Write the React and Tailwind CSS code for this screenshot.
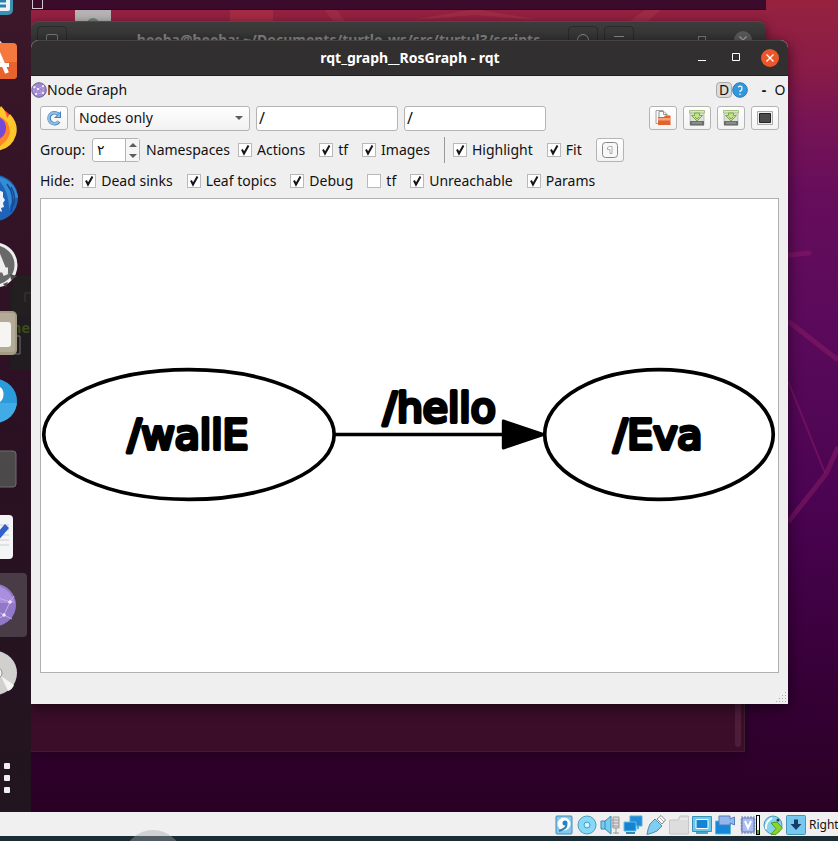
import React from "react";

const DOCK_ICON = "h-12 w-12 shrink-0 overflow-visible";

function DockItem({ label, active, children }) {
  return (
    <button
      type="button"
      aria-label={label}
      className={
        "flex h-[68px] shrink-0 items-center justify-end " +
        (active ? "w-full pr-1" : "w-full pr-[14px]")
      }
    >
      {active ? (
        <span className="flex h-16 w-[72px] shrink-0 items-center justify-end rounded-sm bg-[#4a3c47] pr-[10px]">
          <svg viewBox="0 0 48 48" className={DOCK_ICON}>{children}</svg>
        </span>
      ) : (
        <svg viewBox="0 0 48 48" className={DOCK_ICON}>{children}</svg>
      )}
    </button>
  );
}

function Dock() {
  return (
    <nav
      aria-label="Dock"
      className="relative isolate flex w-[31px] shrink-0 flex-col items-end justify-end overflow-hidden bg-linear-to-b from-[#3b1729] via-[#2c1023] to-[#21151f]"
    >
      <svg className="absolute top-[270px] left-0 -z-10 h-[100px] w-[31px]" viewBox="0 0 31 100" aria-hidden="true">
        <path d="M10 17q0-2 3-2h18v85H10z" fill="#211c20" />
        <path d="M13 6h18v40H13z" fill="#231f21" />
        <path d="M25 32v-9h6" fill="none" stroke="#3c3a3b" />
        <path d="M10 66h10v18H10" fill="none" stroke="#77706f" />
        <text x="13" y="63" fontSize="14" fontWeight="700" fill="#3c4c1b" fontFamily="DejaVu Sans Mono, monospace">he</text>
      </svg>
      <DockItem label="Writer">
        <rect x="2" y="2" width="42" height="44" rx="5" fill="#3b8fb5" />
        <rect x="4" y="2" width="37" height="40" rx="2" fill="#f0f3f5" />
        <path d="M28 32h9M28 37h9M28 27h9" stroke="#2683ad" strokeWidth="3" />
      </DockItem>
      <DockItem label="Software">
        <path d="M22 9q5-11 11-1" fill="none" stroke="#e9dcd7" strokeWidth="2" />
        <rect x="0" y="6" width="48" height="36" rx="4" fill="#f5783f" />
        <path d="M24 25h24v13q0 4-4 4H24z" fill="#e8622d" />
        <path d="M27 11l11 25M22 28h18" fill="none" stroke="#fff" strokeWidth="4" />
      </DockItem>
      <DockItem label="Firefox">
        <circle cx="24" cy="24" r="22" fill="#ff4a3b" />
        <path d="M32 1q5 5 6 12l3-4q9 10 6 21Q42 46 24 46q15-8 14-23-2-9-12-12z" fill="#ffc62c" />
        <path d="M24 10q17 2 17 18-4 13-17 14z" fill="#ff8128" />
        <circle cx="25" cy="23" r="12" fill="#7549d7" />
        <path d="M18 36q18 4 20-14 2 19-16 20z" fill="#ff862d" />
      </DockItem>
      <DockItem label="Thunderbird">
        <circle cx="26" cy="25" r="23" fill="#1e63b8" />
        <path d="M27 3q18 3 22 21-8 4-9 14 1-20-13-34z" fill="#328ed4" />
        <path d="M29 17l5 2v5l2 3-2 3 1 4-3 1 1 4-2-1-2 4h-5V17z" fill="#edf3f8" />
        <path d="M38 11q9 12 4 28M42 14q6 10 2 19" stroke="#174b96" strokeWidth="1.500" fill="none" />
      </DockItem>
      <DockItem label="Software Updater">
        <circle cx="26" cy="24" r="21" fill="#696969" stroke="#eee" strokeWidth="3" />
        <path d="M28 12l9 22M22 29h17" stroke="#eee" strokeWidth="5" />
        <path d="M41 33l7 2-6 4zM34 43l5-2-2 5z" fill="#4e4b4d" />
      </DockItem>
      <DockItem label="Files">
        <rect x="0" y="2" width="48" height="44" rx="5" fill="#a49b87" />
        <rect x="3" y="4" width="43" height="39" rx="3" fill="#b3aa97" />
        <rect x="5" y="13" width="37" height="25" rx="3" fill="#f7f5f1" />
      </DockItem>
      <DockItem label="Help">
        <circle cx="26" cy="24" r="22" fill="#2c9bdc" />
        <path d="M4 26h44q-3 18-22 20Q8 44 4 26z" fill="#40abe4" />
        <path d="M24 12q8-2 8 5t-8 8" fill="none" stroke="#fff" strokeWidth="5" />
      </DockItem>
      <DockItem label="Terminal">
        <rect x="1" y="6" width="46" height="36" rx="3" fill="#4b494a" stroke="#716d6f" />
      </DockItem>
      <DockItem label="Text Editor">
        <rect x="0" y="2" width="44" height="44" rx="4" fill="#f4f5f6" />
        <path d="M6 12h34M6 17h34M6 22h34M6 27h34M6 32h34" stroke="#c9ced1" />
        <path d="M24 25L36 11l4 4-13 15-4 1z" fill="#315fcb" />
      </DockItem>
      <DockItem label="rqt" active>
        <circle cx="26" cy="24" r="21" fill="#9278c9" />
        <path d="M26 4q15 3 20 18H26z" fill="#ab8fdf" />
        <path d="M24 15l17 6-6 13 8 4M35 34l-9 6M41 21l4-6M24 28l11 6" stroke="#c4b0e5" strokeWidth="1" fill="none" />
        <path d="M39 21h4M41 19v4M33 34h4M35 32v4" stroke="#fff" />
      </DockItem>
      <DockItem label="Disk">
        <circle cx="26" cy="24" r="22" fill="#d1d0cf" />
        <path d="M32 27l13 9q-2 5-6 6z" fill="#f4f4f3" />
        <circle cx="27" cy="24" r="6" fill="#f7f7f7" stroke="#8d8c8b" />
      </DockItem>
      <button type="button" aria-label="Show Applications" className="flex h-[105px] w-full shrink-0 flex-col gap-[6px] pt-14 pl-1">
        <span className="h-[6px] w-[6px] rounded-[1px] bg-[#f2edf1]" />
        <span className="h-[6px] w-[6px] rounded-[1px] bg-[#f2edf1]" />
        <span className="h-[6px] w-[6px] rounded-[1px] bg-[#f2edf1]" />
      </button>
    </nav>
  );
}

function Check({ label, on = true }) {
  return (
    <label className="flex shrink-0 items-center gap-[5px]">
      <span className="grid h-[14px] w-[14px]">
        <input
          type="checkbox"
          defaultChecked={on}
          className="peer col-start-1 row-start-1 m-0 h-[14px] w-[14px] appearance-none border border-[#b9b9b9] bg-white"
        />
        <svg viewBox="0 0 14 14" className="pointer-events-none invisible col-start-1 row-start-1 h-[14px] w-[14px] peer-checked:visible">
          <path d="M4 6.500l2 4 4.500-8" fill="none" stroke="#151515" strokeWidth="2" />
        </svg>
      </span>
      <span>{label}</span>
    </label>
  );
}

function ToolButton({ label, children }) {
  return (
    <button
      type="button"
      aria-label={label}
      className="flex h-6 w-7 shrink-0 items-center justify-center rounded-[3px] border border-[#b4b4b4] bg-linear-to-b from-white to-[#f3f3f3]"
    >
      <svg viewBox="0 0 16 16" className="h-4 w-4">{children}</svg>
    </button>
  );
}

function SaveDrawing() {
  return (
    <>
      <path d="M1 1h14v14H1z" fill="#dcdfda" stroke="#a3a79f" strokeWidth=".6" />
      <path d="M1 11h14v4.500H1z" fill="#6b6e6a" />
      <path d="M3 13h10" stroke="#a8aaa6" />
      <path d="M.5.500h15v2.500H.5z" fill="#d5edb2" stroke="#86a859" strokeWidth=".6" />
      <path d="M5.500 3h5v2.500h3L8 11 2.500 5.500h3z" fill="#c0e389" stroke="#719743" strokeWidth=".8" />
      <path d="M6 7l2 2 2-2" fill="none" stroke="#6d9640" strokeWidth=".8" />
    </>
  );
}

function TopicGraph() {
  return (
    <svg viewBox="0 0 738 474" className="h-full w-full" role="img" aria-label="Node graph">
      <g fill="none" stroke="#000" strokeWidth="3.700">
        <ellipse cx="148" cy="236" rx="145.500" ry="65" />
        <ellipse cx="619" cy="236" rx="114.500" ry="65" />
        <path d="M293 236h172" />
      </g>
      <path d="M463 222.500L503 236l-40 13.500z" stroke="#000" strokeWidth="3" strokeLinejoin="round" />
      <g
        fontFamily="DejaVu Sans, sans-serif"
        fontSize="41"
        textAnchor="middle"
        stroke="#000"
        strokeWidth="4"
        strokeLinejoin="round"
      >
        <text x="147" y="251">/wallE</text>
        <text x="399" y="223">/hello</text>
        <text x="618" y="251">/Eva</text>
      </g>
    </svg>
  );
}

function RqtWindow() {
  return (
    <section className="absolute top-10 right-[50px] bottom-[108px] left-0 flex flex-col rounded-t-lg bg-[#efefef] shadow-[0_3px_14px_rgba(0,0,0,0.6)]">
      <header className="flex h-9 shrink-0 items-center rounded-t-lg border-t border-b border-t-[#454343] border-b-[#1f1d1d] bg-[#322f30] pr-[9px] text-white">
        <span className="w-24 shrink-0" />
        <h1 className="min-w-0 flex-1 text-center text-sm font-bold">rqt_graph__RosGraph - rqt</h1>
        <div className="flex shrink-0 items-center gap-4">
          <button type="button" aria-label="Minimize" className="h-[18px] w-[18px]">
            <svg viewBox="0 0 18 18"><path d="M5 11.500h8" stroke="#fff" /></svg>
          </button>
          <button type="button" aria-label="Maximize" className="h-[18px] w-[18px]">
            <svg viewBox="0 0 18 18"><path d="M5.500 4.500h7v7h-7z" fill="none" stroke="#fff" /></svg>
          </button>
          <button type="button" aria-label="Close" className="h-[18px] w-[18px] rounded-full bg-[#e9572b]">
            <svg viewBox="0 0 18 18"><path d="M5.500 5.500l7 7m0-7l-7 7" stroke="#fff" strokeWidth="1.300" /></svg>
          </button>
        </div>
      </header>

      <div className="flex h-7 shrink-0 items-center pr-[2px]">
        <svg viewBox="0 0 16 16" className="h-4 w-4">
          <circle cx="8" cy="8" r="7.300" fill="#9f87d2" stroke="#70658c" />
          <path d="M3 5l4 2 5-3M7 7l-2 5M7 7l5 4M5 12l7-1M12 4v7M3 5v5" stroke="#c3b2e6" strokeWidth=".7" fill="none" />
          <path d="M2.500 5h2M6 7h2M11 4h2M4 12h2M11 11h2" stroke="#fff" strokeWidth="1.500" />
        </svg>
        <h2 className="flex-1">Node Graph</h2>
        <button type="button" className="h-4 w-4 rounded-sm border border-[#aaa] bg-[#dedcda] leading-[14px]">D</button>
        <button type="button" aria-label="Help" className="h-4 w-4">
          <svg viewBox="0 0 16 16">
            <circle cx="8" cy="8" r="7.300" fill="#3298dc" stroke="#287bb5" />
            <path d="M6 5q4-2 4 1T8 9v1M8 11.500V13" fill="none" stroke="#fff" strokeWidth="1.200" />
          </svg>
        </button>
        <button type="button" className="ml-[10px] w-3 font-bold">-</button>
        <button type="button" className="ml-1 w-3">O</button>
      </div>

      <div className="flex h-7 shrink-0 items-center gap-[6px] px-[9px]">
        <ToolButton label="Refresh">
          <path d="M13 11.500A5.500 5.500 0 1 1 12 4" fill="none" stroke="#4680b8" strokeWidth="3.600" />
          <path d="M15 1v7H8z" fill="#4680b8" />
          <path d="M12.500 11.500A5.500 5.500 0 1 1 12 4.300" fill="none" stroke="#8fbde6" strokeWidth="2.200" />
          <path d="M14 3.200V7h-3.800z" fill="#8fbde6" />
        </ToolButton>
        <div className="grid w-[176px] items-center">
          <select
            aria-label="Graph type"
            className="col-start-1 row-start-1 h-[25px] w-full appearance-none rounded-[3px] border border-[#b4b4b4] bg-linear-to-b from-white to-[#f1f1f1] pl-1"
          >
            <option>Nodes only</option>
            <option>Nodes/Topics (active)</option>
            <option>Nodes/Topics (all)</option>
          </select>
          <svg viewBox="0 0 8 4" className="pointer-events-none col-start-1 row-start-1 mr-[7px] h-1 w-2 justify-self-end">
            <path d="M0 0h8L4 4z" fill="#5c5c5c" />
          </svg>
        </div>
        <input aria-label="Node filter" defaultValue="/" className="h-[25px] w-[142px] rounded-[3px] border border-[#b4b4b4] bg-white px-[2px] text-base" />
        <input aria-label="Topic filter" defaultValue="/" className="h-[25px] w-[142px] rounded-[3px] border border-[#b4b4b4] bg-white px-[2px] text-base" />
        <span className="flex-1" />
        <ToolButton label="Load graph">
          <path d="M1 .5h7v13H1z" fill="#f7f7f7" stroke="#a5a5a5" />
          <path d="M4 1.500h5l3 3v6H4z" fill="#fff" stroke="#969696" />
          <path d="M8.500 1.500v3H12" fill="none" stroke="#969696" />
          <path d="M3 7h6l1-1.500h5.500V15H3z" fill="#e4632c" />
          <path d="M3 8h12.500v2.500H3z" fill="#f5a47c" />
        </ToolButton>
        <ToolButton label="Save as DOT"><SaveDrawing /></ToolButton>
        <ToolButton label="Save as SVG"><SaveDrawing /></ToolButton>
        <ToolButton label="Save as image">
          <path d="M.5 1.500h15v13H.5z" fill="#eee" stroke="#aaa" />
          <path d="M2.500 3.500h11v9h-11z" fill="#4b4b4b" stroke="#222" />
        </ToolButton>
      </div>

      <div className="flex h-9 shrink-0 items-center pl-[9px]">
        <label htmlFor="group" className="w-[52px]">Group:</label>
        <div className="flex h-6 w-12 rounded-[3px] border border-[#b4b4b4] bg-white">
          <input id="group" defaultValue="٢" className="w-0 flex-1 pl-1" />
          <div className="flex w-[14px] flex-col border-l border-[#b4b4b4] bg-[#f5f5f5]">
            <button type="button" aria-label="Increase" className="flex flex-1 items-center justify-center">
              <svg viewBox="0 0 8 4" className="h-1 w-2"><path d="M0 4h8L4 0z" fill="#5c5c5c" /></svg>
            </button>
            <button type="button" aria-label="Decrease" className="flex flex-1 items-center justify-center">
              <svg viewBox="0 0 8 4" className="h-1 w-2"><path d="M0 0h8L4 4z" fill="#5c5c5c" /></svg>
            </button>
          </div>
        </div>
        <span className="ml-[6px] w-[92px]">Namespaces</span>
        <div className="flex items-center gap-[14px]">
          <Check label="Actions" />
          <Check label="tf" />
          <Check label="Images" />
        </div>
        <span className="mr-2 ml-[14px] h-[26px] w-px bg-[#999]" />
        <div className="flex items-center gap-[14px]">
          <Check label="Highlight" />
          <Check label="Fit" />
          <ToolButton label="Fit in view">
            <rect x=".5" y=".5" width="15" height="15" rx="3" fill="#f7f7f7" stroke="#888" />
            <path d="M5.500 7V5.500L7.500 4.500H10V11.500H8V7.500H5.500z" fill="#fff" stroke="#999" strokeWidth=".8" />
          </ToolButton>
        </div>
      </div>

      <div className="flex h-[26px] shrink-0 items-center gap-[14px] pl-[9px]">
        <span className="-mr-[6px]">Hide:</span>
        <Check label="Dead sinks" />
        <Check label="Leaf topics" />
        <Check label="Debug" />
        <Check label="tf" on={false} />
        <Check label="Unreachable" />
        <Check label="Params" />
      </div>

      <main className="mx-[9px] mt-1 min-h-0 flex-1 border border-[#b0b0b0] bg-white">
        <TopicGraph />
      </main>
      <div className="flex h-[31px] shrink-0 items-end justify-end p-[2px]">
        <svg viewBox="0 0 10 10" className="h-[10px] w-[10px]" aria-hidden="true">
          <path d="M9 0h1v1H9zM6 3h1v1H6zM9 3h1v1H9zM3 6h1v1H3zM6 6h1v1H6zM9 6h1v1H9zM0 9h1v1H0zM3 9h1v1H3zM6 9h1v1H6zM9 9h1v1H9z" fill="#aaa" />
        </svg>
      </div>
    </section>
  );
}

function Wallpaper() {
  return (
    <svg viewBox="0 0 807 812" preserveAspectRatio="none" className="absolute inset-0 h-full w-full" aria-hidden="true">
      <defs>
        <linearGradient id="sky" x1="0" y1="0" x2="0" y2="1">
          <stop offset="0" stopColor="#96223f" />
          <stop offset=".08" stopColor="#8a1c46" />
          <stop offset=".15" stopColor="#771455" />
          <stop offset=".24" stopColor="#660d5b" />
          <stop offset=".4" stopColor="#5b0a5b" />
          <stop offset=".6" stopColor="#4c0453" />
          <stop offset=".8" stopColor="#3a003c" />
          <stop offset="1" stopColor="#290023" />
        </linearGradient>
      </defs>
      <path d="M0 0h807v812H0z" fill="url(#sky)" />
      <g fill="none" stroke="#8b1b68" strokeOpacity=".5">
        <path d="M750 256l28-3" strokeWidth="5" strokeLinecap="round" />
        <path d="M757 321l50 39" strokeWidth="5" />
        <path d="M757 381l37 92" strokeWidth="2" />
        <path d="M757 522l38-48 12-27" strokeWidth="5" />
      </g>
      <path d="M199 9h43v12h-43z" fill="#a62b45" />
      <path d="M293 9h12l9 12h-12zM381 20l63-11 65 11-65-5zM615 9h16l-14 12h-18z" fill="#9d2b46" />
    </svg>
  );
}

function BackWindows() {
  return (
    <>
      <div className="absolute top-0 right-[72px] left-0 h-[10px] border-b border-[#260a20] bg-[#3b0b2b]">
        <span className="ml-px block h-[9px] w-[11px] border border-t-0 border-[#d4c5d0]" />
      </div>
      <div className="absolute top-[10px] left-11 h-[11px] w-9 overflow-hidden bg-[#b7b3b4]">
        <span className="mx-auto mt-2 block h-3 w-3 rounded-full bg-[#728477]" />
      </div>
      <div className="absolute right-[93px] bottom-[60px] left-0 h-[200px] border-r border-b border-[#39202d] bg-[#3b0d29] pr-[3px] pb-1 shadow-[0_2px_12px_rgba(0,0,0,0.35)]">
        <span className="ml-auto block h-full w-[6px] rounded-full bg-[#4d1d3a]" />
      </div>
      <div className="absolute top-[21px] right-[72px] left-0 flex h-5 items-start justify-between overflow-hidden rounded-t-lg border-t border-[#4b4b4b] bg-linear-to-b from-[#3c3c3c] to-[#343434] px-[6px] pt-1 text-[#858585] shadow-[0_2px_10px_rgba(0,0,0,0.5)]">
        <span className="flex h-7 w-[30px] items-center justify-center rounded-sm border border-[#292929]">
          <span className="h-3 w-3 rounded-[2px] border border-[#777]" />
        </span>
        <span className="mt-1 pl-[42px] text-sm leading-5 font-bold">heeba@heeba: ~/Documents/turtle_ws/src/turtul3/scripts</span>
        <span className="flex gap-[6px] pr-[2px]">
          <span className="flex h-7 w-[30px] justify-center rounded-sm border border-[#292929] pt-[7px]">
            <span className="h-3 w-3 rounded-full border border-[#888]" />
          </span>
          <span className="flex h-7 w-[30px] justify-center rounded-sm border border-[#292929] pt-[9px]">
            <span className="h-px w-[10px] bg-[#888]" />
          </span>
          <span className="mt-[10px] ml-[58px] h-2 w-2 border border-[#777]" />
          <svg viewBox="0 0 18 18" className="mt-[5px] mr-[6px] ml-[22px] h-[18px] w-[18px]">
            <circle cx="9" cy="9" r="9" fill="#5a5a5a" />
            <path d="M5.500 5.500l7 7m0-7l-7 7" stroke="#aaa" strokeWidth="1.300" />
          </svg>
        </span>
      </div>
    </>
  );
}

function StatusIcon({ children, label }) {
  return (
    <svg viewBox="0 0 20 20" className="h-5 w-5 shrink-0" role="img" aria-label={label}>{children}</svg>
  );
}

function StatusBar() {
  return (
    <footer className="shrink-0">
      <div className="flex h-6 items-center justify-end gap-[3px] overflow-hidden bg-[#f0f0f0] pt-[2px] text-[#111]">
        <StatusIcon label="Hard disk">
          <rect x="2" y="1" width="16" height="18" rx="1" fill="#83c9ef" stroke="#448ab3" />
          <circle cx="10" cy="9" r="6.500" fill="#fff" />
          <circle cx="11" cy="8" r="2.500" fill="#1688cc" />
          <path d="M12 9q2 4-7 7" fill="none" stroke="#2b80b6" strokeWidth="2" />
        </StatusIcon>
        <StatusIcon label="Optical disk">
          <circle cx="10" cy="10" r="9" fill="#86d9f7" stroke="#4b9bc0" />
          <circle cx="10" cy="10" r="3" fill="#bfeeff" stroke="#489fc6" />
          <circle cx="10" cy="10" r="1" fill="#fff" />
        </StatusIcon>
        <StatusIcon label="Audio">
          <path d="M1 6h4l6-5v18l-6-5H1z" fill="#73cdf4" stroke="#4288ad" />
          <path d="M5 6v8" stroke="#4288ad" />
          <path d="M13 2h6v11h-6zM16 13v6M13 18h6M12 5h7M12 8h7M12 11h7" fill="#ddd" stroke="#999" />
        </StatusIcon>
        <StatusIcon label="Network">
          <path d="M7 1h12v10H7z" fill="#248bd8" stroke="#54afd3" />
          <path d="M15 11v3" stroke="#54afd3" strokeWidth="2" />
          <path d="M1 7h12v9H1z" fill="#1583d4" stroke="#65bfdd" />
          <path d="M3 18h9" stroke="#3388ae" strokeWidth="2" />
        </StatusIcon>
        <StatusIcon label="USB">
          <path d="M11 4l4-3.500L19.500 5 16 9z" fill="#fff" stroke="#888" />
          <path d="M9 4l7 7-5 5q-4 2-10 3.500Q2 13 4 9z" fill="#7fcdf2" stroke="#488db2" />
          <path d="M14.500 3.500l1 1M16.500 5.500l1 1" stroke="#555" />
        </StatusIcon>
        <StatusIcon label="Shared folders">
          <path d="M.5 19V5H9l2-4h8.500v18z" fill="#ddd" stroke="#c6c6c6" />
          <path d="M11 4h8" stroke="#f7f7f7" />
        </StatusIcon>
        <StatusIcon label="Display">
          <path d="M.5 1.500h19v15H.5z" fill="#67c8ec" stroke="#3b91b5" />
          <path d="M4 4.500h12v9H4z" fill="#1684d5" stroke="#fff" />
          <path d="M4 18h12" stroke="#4aa4cb" strokeWidth="2" />
        </StatusIcon>
        <StatusIcon label="Recording">
          <path d="M.5 6h15v13H.5z" fill="#1687d9" stroke="#5bbbd7" />
          <path d="M4 1h11v3l4.500-2v8L15 8v2H4z" fill="#91b7ef" stroke="#597dbe" />
        </StatusIcon>
        <StatusIcon label="Processor">
          <path d="M4 1v18M7 1v18M10 1v18M13 1v18M16 1v18M2.500 5h15M2.500 8h15M2.500 11h15M2.500 14h15" stroke="#6d7eb6" />
          <path d="M4 3h12v14H4z" fill="#a9bcf1" stroke="#6177b7" />
          <path d="M7 6l3 7 3-7" fill="none" stroke="#fff" strokeWidth="2" />
        </StatusIcon>
        <span className="-ml-[5px] flex h-5 w-1 shrink-0 items-end border border-black bg-white">
          <span className="h-1 w-full bg-[#58ad2a]" />
        </span>
        <StatusIcon label="Mouse integration">
          <circle cx="10" cy="10" r="9" fill="#83d3ef" stroke="#4899bd" />
          <path d="M3 14Q2 7 9 3" fill="none" stroke="#fff" strokeWidth="2" />
          <path d="M8 8l6-1 5.500 6-6.500 6.500H8l5-6z" fill="#8bd52e" stroke="#589b17" />
          <circle cx="15" cy="5" r="1.500" fill="#21394b" />
        </StatusIcon>
        <StatusIcon label="Keyboard">
          <rect x=".5" y=".5" width="19" height="19" rx="1" fill="#76c8ef" stroke="#4993b5" />
          <path d="M8 4.500h4V9h3.500L10 15 4.500 9H8z" fill="#153e69" />
        </StatusIcon>
        <span className="w-[29px] shrink-0 text-xs whitespace-nowrap">Right</span>
      </div>
      <div className="flex h-[5px] bg-[#1b2c35] pl-[123px]">
        <span className="-mt-[6px] h-[60px] w-[60px] shrink-0 rounded-full bg-[#a0a5a5]/40" />
      </div>
    </footer>
  );
}

export default function App() {
  return (
    <div className="flex h-screen flex-col overflow-hidden bg-[#2a0024] font-['Noto_Sans','DejaVu_Sans',sans-serif] text-sm text-[#111]">
      <div className="flex min-h-0 flex-1">
        <Dock />
        <div className="relative min-w-0 flex-1 overflow-hidden">
          <Wallpaper />
          <BackWindows />
          <RqtWindow />
        </div>
      </div>
      <StatusBar />
    </div>
  );
}
